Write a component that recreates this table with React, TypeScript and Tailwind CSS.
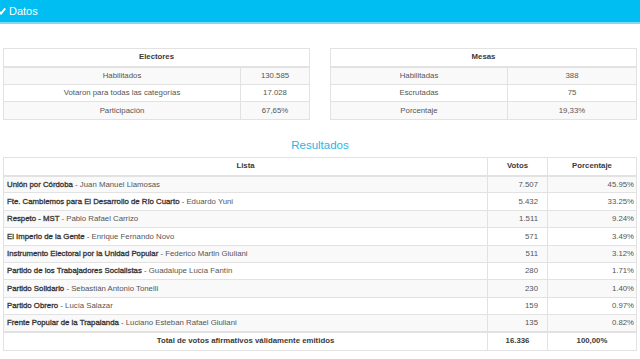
import React from "react";

type Fila = { partido: string; candidato: string; votos: string; porcentaje: string };

const resultados: Fila[] = [
  { partido: "Unión por Córdoba", candidato: "Juan Manuel Llamosas", votos: "7.507", porcentaje: "45.95%" },
  { partido: "Fte. Cambiemos para El Desarrollo de Río Cuarto", candidato: "Eduardo Yuni", votos: "5.432", porcentaje: "33.25%" },
  { partido: "Respeto - MST", candidato: "Pablo Rafael Carrizo", votos: "1.511", porcentaje: "9.24%" },
  { partido: "El Imperio de la Gente", candidato: "Enrique Fernando Novo", votos: "571", porcentaje: "3.49%" },
  { partido: "Instrumento Electoral por la Unidad Popular", candidato: "Federico Martin Giuliani", votos: "511", porcentaje: "3.12%" },
  { partido: "Partido de los Trabajadores Socialistas", candidato: "Guadalupe Lucía Fantín", votos: "280", porcentaje: "1.71%" },
  { partido: "Partido Solidario", candidato: "Sebastián Antonio Tonelli", votos: "230", porcentaje: "1.40%" },
  { partido: "Partido Obrero", candidato: "Lucía Salazar", votos: "159", porcentaje: "0.97%" },
  { partido: "Frente Popular de la Trapalanda", candidato: "Luciano Esteban Rafael Giuliani", votos: "135", porcentaje: "0.82%" },
];

function ResumenTabla({ titulo, filas, split }: { titulo: string; filas: [string, string][]; split: string }) {
  return (
    <table className="flex-1 border-collapse border border-[#e2e2e2] table-fixed">
      <colgroup>
        <col className={split} />
        <col />
      </colgroup>
      <thead>
        <tr className="h-[18px] bg-white">
          <th colSpan={2} className="border-b-2 border-[#e2e2e2] font-bold text-[#3a3a3a] text-center">
            {titulo}
          </th>
        </tr>
      </thead>
      <tbody>
        {filas.map(([k, v], i) => (
          <tr key={k} className={`h-[17.7px] ${i % 2 === 0 ? "bg-[#f9f9f9]" : "bg-white"}`}>
            <td className="border border-[#e2e2e2] text-center text-[#555]">{k}</td>
            <td className="border border-[#e2e2e2] text-center text-[#555]">{v}</td>
          </tr>
        ))}
      </tbody>
    </table>
  );
}

export default function App() {
  return (
    <div className="w-[640px] h-[359px] overflow-hidden bg-white text-[7.8px] leading-none font-['Liberation_Sans',Arial,sans-serif]">
      <div className="h-[24px] bg-[#00bdf2] flex items-center border-b-2 border-[#7fd9f5]">
        <svg width="8" height="8" viewBox="0 0 10 10" className="ml-[-2px] mr-[3px]">
          <path d="M1 5.5 L3.8 8.2 L9 1.8" fill="none" stroke="white" strokeWidth="2.4" />
        </svg>
        <span className="text-white text-[11px]">Datos</span>
      </div>

      <div className="flex gap-[20px] px-[3px] mt-[24px]">
        <ResumenTabla
          titulo="Electores"
          split="w-[237px]"
          filas={[
            ["Habilitados", "130.585"],
            ["Votaron para todas las categorías", "17.028"],
            ["Participación", "67,65%"],
          ]}
        />
        <ResumenTabla
          titulo="Mesas"
          split="w-[177px]"
          filas={[
            ["Habilitadas", "388"],
            ["Escrutadas", "75"],
            ["Porcentaje", "19,33%"],
          ]}
        />
      </div>

      <h2 className="text-center text-[11.5px] text-[#29b6e6] mt-[19px] mb-[5px] leading-[13px]">Resultados</h2>

      <div className="px-[3px]">
        <table className="w-full border-collapse border border-[#e2e2e2] table-fixed">
          <colgroup>
            <col />
            <col className="w-[60px]" />
            <col className="w-[89px]" />
          </colgroup>
          <thead>
            <tr className="h-[18px] bg-white">
              <th className="border border-b-2 border-[#e2e2e2] font-bold text-[#3a3a3a] text-center">Lista</th>
              <th className="border border-b-2 border-[#e2e2e2] font-bold text-[#3a3a3a] text-center">Votos</th>
              <th className="border border-b-2 border-[#e2e2e2] font-bold text-[#3a3a3a] text-center">Porcentaje</th>
            </tr>
          </thead>
          <tbody>
            {resultados.map((r, i) => (
              <tr key={r.partido} className={`h-[17.4px] ${i % 2 === 0 ? "bg-[#f9f9f9]" : "bg-white"}`}>
                <td className="border border-[#e2e2e2] pl-[3px] text-left whitespace-nowrap">
                  <span className="text-[#333] [-webkit-text-stroke:0.3px_#333]">{r.partido}</span>
                  <span className="text-[#555]"> - {r.candidato}</span>
                </td>
                <td className="border border-[#e2e2e2] text-right pr-[9px] text-[#555]">{r.votos}</td>
                <td className="border border-[#e2e2e2] text-right pr-[2px] text-[#555]">{r.porcentaje}</td>
              </tr>
            ))}
          </tbody>
          <tfoot>
            <tr className="h-[18px] bg-white">
              <td className="border border-t-2 border-[#e2e2e2] text-center font-bold text-[#3a3a3a]">
                Total de votos afirmativos válidamente emitidos
              </td>
              <td className="border border-t-2 border-[#e2e2e2] text-center font-bold text-[#3a3a3a]">16.336</td>
              <td className="border border-t-2 border-[#e2e2e2] text-center font-bold text-[#3a3a3a]">100,00%</td>
            </tr>
          </tfoot>
        </table>
      </div>
    </div>
  );
}
